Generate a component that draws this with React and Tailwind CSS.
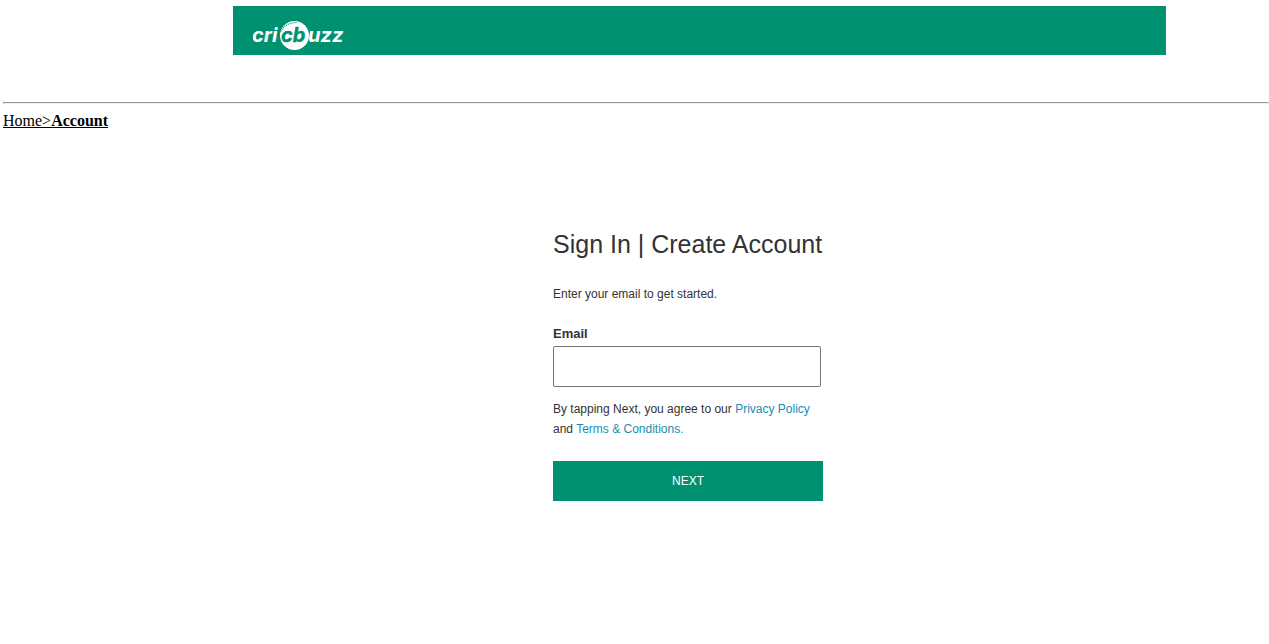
function Logo() {
  return (
    <svg viewBox="0 0 92 30" className="h-[30px] w-[92px]" role="img" aria-label="cricbuzz">
      <circle cx="41.500" cy="14.500" r="14.500" fill="#fff" />
      <path d="M28 10.500C31 4 37 1.500 44 1.500" fill="none" stroke="#009270" strokeWidth="1.200" strokeDasharray="1 1" />
      <g fontFamily="Inter, sans-serif" fontWeight="700" fontStyle="italic" fontSize="20">
        <text x="-1" y="21" fill="#fff">cri</text>
        <text x="28" y="21" fill="#009270" stroke="#009270" strokeWidth="0.400">cb</text>
        <text x="55" y="21" fill="#fff">uzz</text>
      </g>
    </svg>
  );
}

export default function App() {
  return (
    <div className="bg-white pt-1.5 pl-[3px] font-['Liberation_Sans',Arial,sans-serif] text-[#333]">
      <header className="mr-[103px] ml-[230px] flex h-[49px] items-center bg-[#009270] pt-[10px] pl-5">
        <a href="#home"><Logo /></a>
      </header>
      <hr className="mt-[47px] h-0.5 border border-[#9a9a9a] border-r-[#eee] border-b-[#eee]" />
      <nav className="mt-2 font-['Liberation_Serif',serif] text-base leading-[18px] text-black underline">
        <a href="#home">Home&gt;</a><a href="#account" className="font-bold">Account</a>
      </nav>
      <main className="flex justify-center pt-[94px] pl-[104px]">
        <form className="w-[270px]" onSubmit={(e) => e.preventDefault()}>
          <h1 className="text-[25px] leading-10 whitespace-nowrap">Sign In | Create Account</h1>
          <p className="mt-5 text-xs leading-5">Enter your email to get started.</p>
          <label htmlFor="email" className="mt-5 block text-[13px] leading-5 font-bold">Email</label>
          <input
            id="email"
            type="email"
            className="mt-0.5 block h-[41px] w-[268px] rounded-xs border border-[#767676] px-2 text-sm"
          />
          <p className="mt-3 text-xs leading-5">
            By tapping Next, you agree to our{' '}
            <a href="#privacy" className="text-[#1a8db0]">Privacy Policy</a> and{' '}
            <a href="#terms" className="text-[#1a8db0]">Terms &amp; Conditions.</a>
          </p>
          <button type="submit" className="mt-[22px] block h-10 w-full bg-[#009270] text-xs text-white">NEXT</button>
        </form>
      </main>
    </div>
  );
}
